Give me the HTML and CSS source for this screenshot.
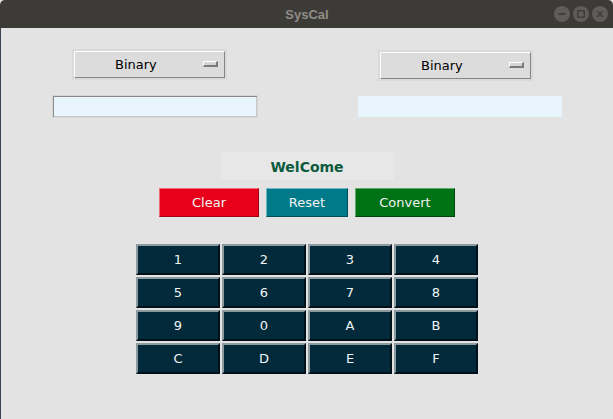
FILE: index.html
```html
<!DOCTYPE html>
<html>
<head>
<meta charset="utf-8">
<title>SysCal</title>
<link rel="stylesheet" href="styles.css">
</head>
<body>
<div class="window">
  <div class="titlebar">
    <span class="title">SysCal</span>
    <div class="controls">
      <span class="ctl"><svg width="16" height="16" viewBox="0 0 16 16"><circle cx="8" cy="8" r="8" fill="#5e5d59"/><path d="M4.5 8h7" stroke="#3a3935" stroke-width="1.6"/></svg></span>
      <span class="ctl"><svg width="16" height="16" viewBox="0 0 16 16"><circle cx="8" cy="8" r="8" fill="#5e5d59"/><rect x="4.8" y="4.8" width="6.4" height="6.4" fill="none" stroke="#3a3935" stroke-width="1.3"/></svg></span>
      <span class="ctl"><svg width="16" height="16" viewBox="0 0 16 16"><circle cx="8" cy="8" r="8" fill="#5e5d59"/><path d="M5.3 5.3l5.4 5.4M10.7 5.3l-5.4 5.4" stroke="#3a3935" stroke-width="1.3"/></svg></span>
    </div>
  </div>
  <div class="content">
    <div class="inputs">
      <div class="col col-left">
        <div class="dropdown"><div class="menubtn"><span class="label">Binary</span><span class="indicator"></span></div></div>
        <div class="entry focused"></div>
      </div>
      <div class="col col-right">
        <div class="dropdown"><div class="menubtn"><span class="label">Binary</span><span class="indicator"></span></div></div>
        <div class="entry"></div>
      </div>
    </div>
    <div class="welcome">WelCome</div>
    <div class="actions">
      <button class="btn clear">Clear</button>
      <button class="btn reset">Reset</button>
      <button class="btn convert">Convert</button>
    </div>
    <div class="keypad">
      <button class="key">1</button><button class="key">2</button><button class="key">3</button><button class="key">4</button>
      <button class="key">5</button><button class="key">6</button><button class="key">7</button><button class="key">8</button>
      <button class="key">9</button><button class="key">0</button><button class="key">A</button><button class="key">B</button>
      <button class="key">C</button><button class="key">D</button><button class="key">E</button><button class="key">F</button>
    </div>
  </div>
</div>
</body>
</html>
```
FILE: styles.css
```css
* { box-sizing: border-box; }
html, body { margin: 0; padding: 0; }
body {
  width: 613px;
  height: 419px;
  overflow: hidden;
  font-family: "DejaVu Sans", sans-serif;
  background: #e3e3e3;
}
.window {
  width: 613px;
  height: 419px;
  display: flex;
  flex-direction: column;
}
.titlebar {
  height: 28px;
  flex: none;
  background: #3c3b37;
  position: relative;
  display: flex;
  align-items: center;
  justify-content: center;
  border-radius: 5px 5px 0 0;
}
.title {
  font-family: "Liberation Sans", sans-serif;
  font-weight: bold;
  font-size: 13px;
  color: #8f8e89;
  margin-left: 1px;
}
.controls {
  position: absolute;
  right: 5px;
  top: 6px;
  display: flex;
  gap: 3px;
}
.ctl { display: block; width: 16px; height: 16px; }
.ctl svg { display: block; }
.content {
  flex: 1;
  background: #e3e3e3;
  display: flex;
  flex-direction: column;
  border-left: 1px solid #3a4450;
}
.inputs {
  display: grid;
  grid-template-columns: 305px 307px;
  margin-top: 21px;
}
.col { display: flex; flex-direction: column; }
.col-left .dropdown { margin-left: 71px; }
.col-left .entry { margin-left: 51px; margin-top: 15px; width: 206px; height: 23px; }
.col-right { padding-top: 1px; }
.col-right .dropdown { margin-left: 72px; }
.col-right .entry { margin-left: 52px; margin-top: 15px; width: 204px; height: 21px; }
.dropdown {
  width: 155px;
  height: 31px;
  padding: 2px;
  background: #dadada;
}
.menubtn {
  width: 100%;
  height: 100%;
  background: #dcdcdc;
  border-top: 1px solid #ffffff;
  border-left: 1px solid #ffffff;
  border-right: 1px solid #858585;
  border-bottom: 1px solid #858585;
  display: flex;
  align-items: center;
  padding-left: 40px;
  padding-right: 6px;
}
.label {
  flex: 1;
  font-size: 13px;
  color: #000;
}
.indicator {
  width: 15px;
  height: 6px;
  background: #d4d4d4;
  border-top: 1px solid #ffffff;
  border-left: 1px solid #ffffff;
  border-right: 2px solid #7a7a7a;
  border-bottom: 2px solid #7a7a7a;
  margin-top: -1px;
}
.entry {
  background: #e9f5fd;
}
.entry.focused {
  border: 1px solid #d6d6d6;
  box-shadow: inset 1px 1px 0 #8a8a8a, inset -1px -1px 0 #c8c8c8;
}
.welcome {
  align-self: center;
  margin-top: 34px;
  width: 173px;
  height: 28px;
  padding-top: 2px;
  background: #e7e7e7;
  display: flex;
  align-items: center;
  justify-content: center;
  font-weight: bold;
  font-size: 14px;
  color: #0c5a3c;
}
.actions {
  display: flex;
  justify-content: center;
  gap: 7px;
  margin-top: 8px;
}
.btn {
  height: 29px;
  font-family: "DejaVu Sans", sans-serif;
  font-size: 13px;
  color: #f2f2f2;
  border: 1px solid;
  padding: 0;
  margin: 0;
}
.clear { width: 100px; background: #e8001b; border-color: #f06a78 #9e0010 #9e0010 #f06a78; }
.reset { width: 82px; background: #007a89; border-color: #6ab8c2 #004d57 #004d57 #6ab8c2; }
.convert { width: 100px; background: #007216; border-color: #5ea86a #00440c #00440c #5ea86a; }
.keypad {
  align-self: center;
  margin-top: 27px;
  display: grid;
  grid-template-columns: repeat(4, 84px);
  grid-auto-rows: 31px;
  gap: 2px;
}
.key {
  background: #032a3a;
  color: #f0f4f6;
  font-family: "DejaVu Sans", sans-serif;
  font-size: 13px;
  border: 2px solid;
  border-color: #8d9ba1 #00111a #00111a #8d9ba1;
  padding: 0;
  margin: 0;
}
```
